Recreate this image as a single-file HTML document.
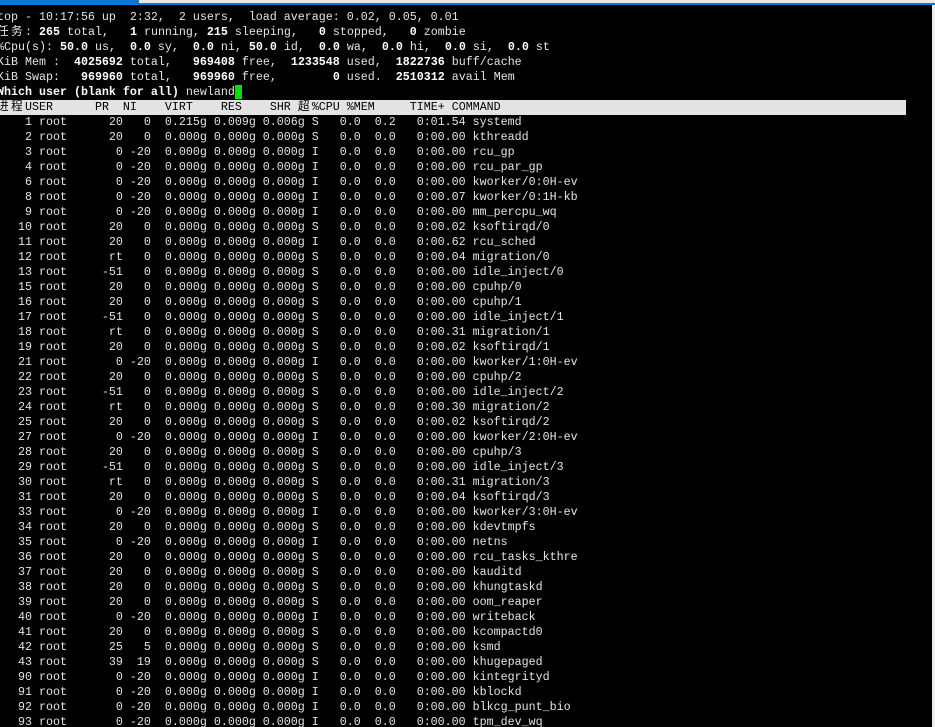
<!DOCTYPE html>
<html><head><meta charset="utf-8"><style>
html,body{margin:0;padding:0;background:#000;width:935px;height:727px;overflow:hidden;position:relative}
.top1{position:absolute;left:0;top:0;width:139px;height:5px;background:#0a78d7}
.top2{position:absolute;left:139px;top:0;width:796px;height:3px;background:#e8e8e8}
.top3{position:absolute;left:139px;top:3px;width:796px;height:2px;background:#0a78d7}
.rs{position:absolute;left:932px;top:5px;width:3px;height:722px;background:#eeeeee}
pre{position:absolute;left:-3px;top:10px;margin:0;font-family:"Liberation Mono","Noto Sans CJK SC",monospace;font-size:11.67px;line-height:15px;color:#e4e4e4;white-space:pre}
b{font-weight:bold;color:#fff}
.c{display:inline-block;width:14px;overflow:hidden;vertical-align:top}
.hdr{display:inline-block;background:#e3e3e3;color:#000;width:909px}
.cur{background:#00e000;color:#00e000}
</style></head><body>
<div class="top1"></div><div class="top2"></div><div class="top3"></div><div class="rs"></div>
<pre>top - 10:17:56 up  2:32,  2 users,  load average: 0.02, 0.05, 0.01
<span class="c">任</span><span class="c">务</span>: <b>265</b> total,   <b>1</b> running, <b>215</b> sleeping,   <b>0</b> stopped,   <b>0</b> zombie
%Cpu(s): <b>50.0</b> us,  <b>0.0</b> sy,  <b>0.0</b> ni, <b>50.0</b> id,  <b>0.0</b> wa,  <b>0.0</b> hi,  <b>0.0</b> si,  <b>0.0</b> st
KiB Mem :  <b>4025692</b> total,   <b>969408</b> free,  <b>1233548</b> used,  <b>1822736</b> buff/cache
KiB Swap:   <b>969960</b> total,   <b>969960</b> free,        <b>0</b> used.  <b>2510312</b> avail Mem
<b>Which user (blank for all)</b> newland<span class="cur">_</span>
<span class="hdr"><span class="c">进</span><span class="c">程</span>USER      PR  NI    VIRT    RES    SHR <span class="c">超</span>%CPU %MEM     TIME+ COMMAND</span>
    1 root      20   0  0.215g 0.009g 0.006g S   0.0  0.2   0:01.54 systemd
    2 root      20   0  0.000g 0.000g 0.000g S   0.0  0.0   0:00.00 kthreadd
    3 root       0 -20  0.000g 0.000g 0.000g I   0.0  0.0   0:00.00 rcu_gp
    4 root       0 -20  0.000g 0.000g 0.000g I   0.0  0.0   0:00.00 rcu_par_gp
    6 root       0 -20  0.000g 0.000g 0.000g I   0.0  0.0   0:00.00 kworker/0:0H-ev
    8 root       0 -20  0.000g 0.000g 0.000g I   0.0  0.0   0:00.07 kworker/0:1H-kb
    9 root       0 -20  0.000g 0.000g 0.000g I   0.0  0.0   0:00.00 mm_percpu_wq
   10 root      20   0  0.000g 0.000g 0.000g S   0.0  0.0   0:00.02 ksoftirqd/0
   11 root      20   0  0.000g 0.000g 0.000g I   0.0  0.0   0:00.62 rcu_sched
   12 root      rt   0  0.000g 0.000g 0.000g S   0.0  0.0   0:00.04 migration/0
   13 root     -51   0  0.000g 0.000g 0.000g S   0.0  0.0   0:00.00 idle_inject/0
   15 root      20   0  0.000g 0.000g 0.000g S   0.0  0.0   0:00.00 cpuhp/0
   16 root      20   0  0.000g 0.000g 0.000g S   0.0  0.0   0:00.00 cpuhp/1
   17 root     -51   0  0.000g 0.000g 0.000g S   0.0  0.0   0:00.00 idle_inject/1
   18 root      rt   0  0.000g 0.000g 0.000g S   0.0  0.0   0:00.31 migration/1
   19 root      20   0  0.000g 0.000g 0.000g S   0.0  0.0   0:00.02 ksoftirqd/1
   21 root       0 -20  0.000g 0.000g 0.000g I   0.0  0.0   0:00.00 kworker/1:0H-ev
   22 root      20   0  0.000g 0.000g 0.000g S   0.0  0.0   0:00.00 cpuhp/2
   23 root     -51   0  0.000g 0.000g 0.000g S   0.0  0.0   0:00.00 idle_inject/2
   24 root      rt   0  0.000g 0.000g 0.000g S   0.0  0.0   0:00.30 migration/2
   25 root      20   0  0.000g 0.000g 0.000g S   0.0  0.0   0:00.02 ksoftirqd/2
   27 root       0 -20  0.000g 0.000g 0.000g I   0.0  0.0   0:00.00 kworker/2:0H-ev
   28 root      20   0  0.000g 0.000g 0.000g S   0.0  0.0   0:00.00 cpuhp/3
   29 root     -51   0  0.000g 0.000g 0.000g S   0.0  0.0   0:00.00 idle_inject/3
   30 root      rt   0  0.000g 0.000g 0.000g S   0.0  0.0   0:00.31 migration/3
   31 root      20   0  0.000g 0.000g 0.000g S   0.0  0.0   0:00.04 ksoftirqd/3
   33 root       0 -20  0.000g 0.000g 0.000g I   0.0  0.0   0:00.00 kworker/3:0H-ev
   34 root      20   0  0.000g 0.000g 0.000g S   0.0  0.0   0:00.00 kdevtmpfs
   35 root       0 -20  0.000g 0.000g 0.000g I   0.0  0.0   0:00.00 netns
   36 root      20   0  0.000g 0.000g 0.000g S   0.0  0.0   0:00.00 rcu_tasks_kthre
   37 root      20   0  0.000g 0.000g 0.000g S   0.0  0.0   0:00.00 kauditd
   38 root      20   0  0.000g 0.000g 0.000g S   0.0  0.0   0:00.00 khungtaskd
   39 root      20   0  0.000g 0.000g 0.000g S   0.0  0.0   0:00.00 oom_reaper
   40 root       0 -20  0.000g 0.000g 0.000g I   0.0  0.0   0:00.00 writeback
   41 root      20   0  0.000g 0.000g 0.000g S   0.0  0.0   0:00.00 kcompactd0
   42 root      25   5  0.000g 0.000g 0.000g S   0.0  0.0   0:00.00 ksmd
   43 root      39  19  0.000g 0.000g 0.000g S   0.0  0.0   0:00.00 khugepaged
   90 root       0 -20  0.000g 0.000g 0.000g I   0.0  0.0   0:00.00 kintegrityd
   91 root       0 -20  0.000g 0.000g 0.000g I   0.0  0.0   0:00.00 kblockd
   92 root       0 -20  0.000g 0.000g 0.000g I   0.0  0.0   0:00.00 blkcg_punt_bio
   93 root       0 -20  0.000g 0.000g 0.000g I   0.0  0.0   0:00.00 tpm_dev_wq
</pre>
</body></html>
